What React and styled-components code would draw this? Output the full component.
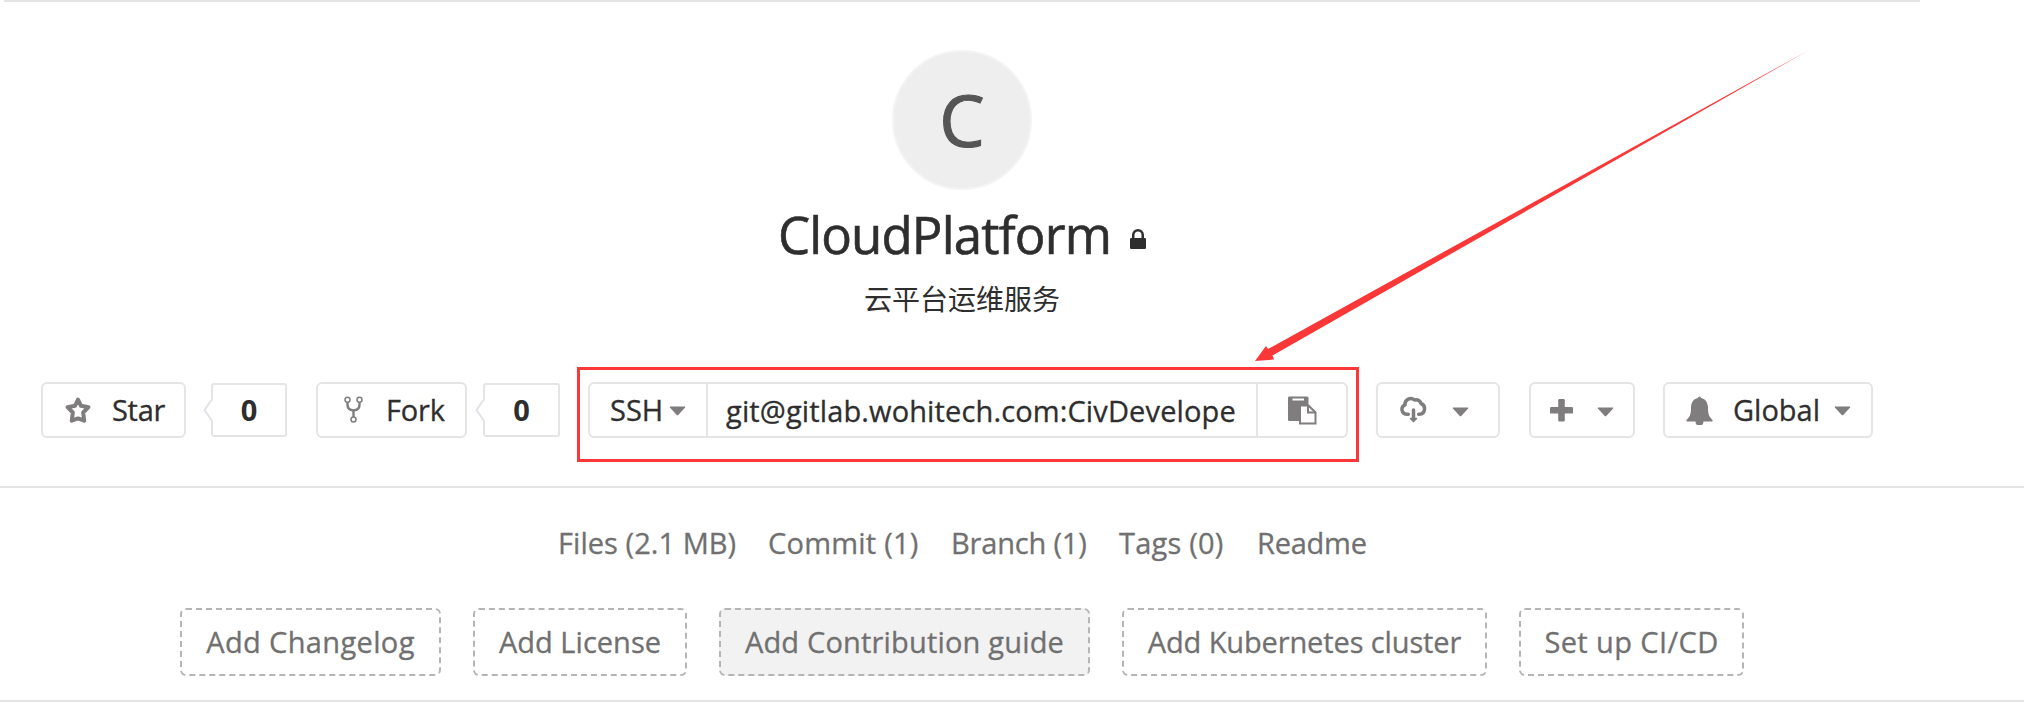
import React from "react";
import styled, { createGlobalStyle } from "styled-components";

const Global = createGlobalStyle`
  *{box-sizing:border-box}
  body{margin:0;background:#fff;font-family:"Open Sans","Noto Sans","Noto Sans CJK SC",sans-serif;color:#2e2e2e;overflow:hidden;-webkit-text-stroke:0.3px}
`;
const Page = styled.main`
  position:relative;width:2024px;height:718px;background:#fff;overflow:hidden;
`;
const Header = styled.header`
  width:1916px;margin-left:4px;height:486px;border-top:2px solid #e5e5e5;
  display:flex;flex-direction:column;align-items:center;
`;
const Avatar = styled.div`
  width:140px;height:140px;margin-top:48px;border-radius:50%;background:#eee;border:2px solid #f4f4f4;
  display:flex;align-items:center;justify-content:center;color:#555;font-size:72px;line-height:134px;padding-bottom:2px;
  -webkit-text-stroke:1.2px;
`;
const TitleRow = styled.div`
  display:flex;align-items:center;height:70px;margin-top:9px;
`;
const Title = styled.h1`
  margin:0;font-size:51px;font-weight:400;line-height:70px;white-space:nowrap;letter-spacing:-0.85px;
  -webkit-text-stroke:0.6px;
`;
const Description = styled.p`
  margin:7px 0 0;font-size:28px;line-height:44px;font-family:"Noto Sans CJK SC",sans-serif;font-weight:400;
  -webkit-text-stroke:0;
`;
const Toolbar = styled.div`
  display:flex;align-items:center;height:56px;margin-top:62px;align-self:flex-start;margin-left:37px;
`;
const Button = styled.button`
  height:56px;width:${p => p.$w}px;margin-left:${p => p.$ml || 0}px;padding:0 0 0 ${p => p.$pl}px;
  display:flex;align-items:center;background:#fff;border:2px solid #e5e5e5;border-radius:6px;
  font:400 29px/52px "Open Sans",sans-serif;color:#2e2e2e;white-space:nowrap;
`;
const Label = styled.span`
  margin-left:${p => p.$ml || 0}px;letter-spacing:${p => p.$track || 0}px;
`;
const Count = styled.span`
  position:relative;width:${p => p.$w}px;height:54px;margin-left:${p => p.$ml}px;border:2px solid #e5e5e5;border-radius:3px;
  text-align:center;font-size:29px;font-weight:700;line-height:50px;-webkit-text-stroke:0;
`;
const Notch = styled.svg`
  position:absolute;left:-10px;top:12px;
`;
const CloneGroup = styled.div`
  display:flex;width:760px;height:56px;margin-left:28px;border:2px solid #e5e5e5;border-radius:6px;font-size:29px;line-height:52px;
`;
const Protocol = styled.div`
  width:118px;padding-left:20px;display:flex;align-items:center;border-right:2px solid #e5e5e5;
`;
const Url = styled.div`
  flex:1;margin:0 20px 0 18px;overflow:hidden;white-space:nowrap;letter-spacing:0.13px;line-height:54px;
`;
const Copy = styled.div`
  width:90px;border-left:2px solid #e5e5e5;display:flex;align-items:center;padding-left:30px;
`;
const Icon = styled.svg`
  display:block;flex:none;margin-left:${p => p.$ml || 0}px;margin-top:${p => p.$mt || 0}px;
`;
const Stats = styled.nav`
  height:114px;border-top:2px solid #e5e5e5;width:2024px;padding-left:558px;display:flex;
`;
const Stat = styled.a`
  width:${p => p.$w}px;font-size:29px;line-height:40px;color:#707070;margin-top:35px;white-space:nowrap;letter-spacing:${p => p.$track}px;
`;
const Actions = styled.div`
  height:102px;border-bottom:2px solid #e5e5e5;display:flex;gap:32px;padding:8px 0 0 180px;
`;
const Action = styled.a`
  height:68px;width:${p => p.$w}px;border:2px dashed #b5b5b5;border-radius:6px;background:${p => (p.$active ? "#f2f2f2" : "#fff")};
  text-align:center;font-size:29px;line-height:64px;color:#707070;white-space:nowrap;letter-spacing:${p => p.$track}px;
`;
const Highlight = styled.div`
  position:absolute;left:577px;top:367px;width:782px;height:95px;border:3px solid #fc3737;
`;
const Arrow = styled.svg`
  position:absolute;left:1240px;top:40px;
`;

const Caret = ({ ml, mt }) => (
  <Icon $ml={ml} $mt={mt} width="17" height="10" viewBox="0 0 17 10"><path d="M1.2.5h14.6q.9.2.3 1L9.5 8.7q-1 1-2 0L.9 1.5q-.6-.8.3-1Z" fill="#807d7e" /></Icon>
);
const CountBox = ({ w, ml }) => (
  <Count $w={w} $ml={ml}>0
    <Notch width="10" height="26" viewBox="0 0 10 26"><path d="M10 1v24L1 13Z" fill="#fff" /><path d="M9.500 1.500 1.500 13l8 11.500" fill="none" stroke="#e2e3e8" strokeWidth="2" /></Notch>
  </Count>
);

const stats = [["Files (2.1 MB)", 210, 0.05], ["Commit (1)", 183, 0.22], ["Branch (1)", 168, -0.18], ["Tags (0)", 138, 0.2], ["Readme", 120, -0.25]];
const actions = [["Add Changelog", 261, 0.36], ["Add License", 214, 0.03], ["Add Contribution guide", 371, 0.18, true], ["Add Kubernetes cluster", 365, -0.12], ["Set up CI/CD", 225, 0.4]];

export default function App() {
  return (
    <Page>
      <Global />
      <Header>
        <Avatar>C</Avatar>
        <TitleRow>
          <Title>CloudPlatform</Title>
          <Icon $ml={19} $mt={9} width="16" height="20" viewBox="0 0 16 20" fill="#2e2e2e"><path d="M1.2 9H2V6a6 6 0 0 1 12 0v3h.8q1.2 0 1.2 1.2v8.6q0 1.2-1.2 1.2H1.200Q0 20 0 18.800v-8.600Q0 9 1.200 9Zm3.300 0h7V6a3.500 3.500 0 0 0-7 0Z" /></Icon>
        </TitleRow>
        <Description>云平台运维服务</Description>
        <Toolbar>
          <Button $w={145} $pl={21}>
            <Icon width="28" height="28" viewBox="0 0 28 28" fill="none" stroke="#807d7e" strokeWidth="4" strokeLinejoin="round"><path d="m14 3.500 3 6.300 7.500 1.400-5.300 5.300 1 8.200-6.200-2.300-6.200 2.300 1-8.200-5.300-5.300L11 9.800Z" /></Icon>
            <Label $ml={20} $track={-0.3}>Star</Label>
          </Button>
          <CountBox w={76} ml={25} />
          <Button $w={151} $pl={26} $ml={29}>
            <Icon width="19" height="28" viewBox="0 0 19 28" fill="none" stroke="#807d7e"><circle cx="3.500" cy="3.800" r="2.500" strokeWidth="1.500" /><circle cx="15.500" cy="3.800" r="2.500" strokeWidth="1.500" /><circle cx="9.500" cy="23.500" r="2.500" strokeWidth="1.500" /><path d="M3.500 6.500v2.300q0 5.200 6 5.700 6-.5 6-5.700V6.500M9.500 14v7" strokeWidth="2.400" /></Icon>
            <Label $ml={23} $track={-0.2}>Fork</Label>
          </Button>
          <CountBox w={77} ml={16} />
          <CloneGroup>
            <Protocol><Label>SSH</Label><Caret ml={6} mt={2} /></Protocol>
            <Url>git@gitlab.wohitech.com:CivDevelope/</Url>
            <Copy>
              <Icon width="29" height="29" viewBox="0 0 29 29"><path d="M1 .5h18q1.500 0 1.500 1.500v7H11v16H1.500Q0 25 0 23.500V2Q0 .5 1 .5Z" fill="#807d7e" /><path d="M4.500 3.500H16" stroke="#fff" strokeWidth="2" /><path d="M12 9.500h8.500l7 7v11H12Z" fill="#fff" stroke="#807d7e" strokeWidth="2" /><path d="M20 9v7.500h8" fill="none" stroke="#807d7e" strokeWidth="2" /></Icon>
            </Copy>
          </CloneGroup>
          <Button $w={124} $pl={22} $ml={28}>
            <Icon width="27" height="28" viewBox="0 0 27 28" fill="none" stroke="#807d7e" strokeWidth="3.500" strokeLinecap="round" strokeLinejoin="round"><path d="M8.300 18.300H7.500C.7 18 .5 10 5 9 4.500 3 11 .8 14.500 4c3-.8 5.800.7 6.500 3.500 5.200 2 4.700 10.500-1.500 10.800h-.8" /><path d="M13.500 14v8" /><path d="M10.500 22.500h6l-3 3Z" fill="#807d7e" strokeWidth="1.500" /></Icon>
            <Caret ml={25} mt={3} />
          </Button>
          <Button $w={106} $pl={19} $ml={29}>
            <Icon width="23" height="23" viewBox="0 0 23 23" fill="#807d7e"><rect x="8.200" y="0" width="6.600" height="22.500" rx="1.200" /><rect x="0" y="8" width="23" height="6.600" rx="1.200" /></Icon>
            <Caret ml={24} mt={3} />
          </Button>
          <Button $w={210} $pl={21} $ml={28}>
            <Icon width="27" height="29" viewBox="0 0 27 29" fill="#807d7e"><path d="M12 2q0-1.500 1.500-1.500T15 2c5 1 7 5 7 10 0 8 2 9 4.500 12 .5 1 0 1.500-.8 1.500h-8.200a4 4 0 0 1-8 0H1.300c-.8 0-1.300-.5-.8-1.500C3 21 5 20 5 12c0-5 2-9 7-10Z" /></Icon>
            <Label $ml={20}>Global</Label><Caret ml={14} mt={2} />
          </Button>
        </Toolbar>
      </Header>
      <Stats>{stats.map(([t, w, k]) => <Stat key={t} $w={w} $track={k}>{t}</Stat>)}</Stats>
      <Actions>{actions.map(([t, w, k, a]) => <Action key={t} $w={w} $track={k} $active={a}>{t}</Action>)}</Actions>
      <Highlight />
      <Arrow width="580" height="330" viewBox="1240 40 580 330"><path d="M1809 50 1272.500 355.500l1.500 4-19 1.500 11-15 2 3Z" fill="#fc3737" /></Arrow>
    </Page>
  );
}
